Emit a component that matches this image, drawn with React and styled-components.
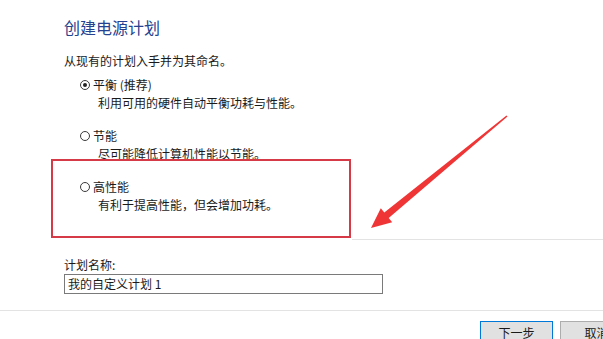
import React from "react";
import styled, { createGlobalStyle } from "styled-components";

const Global = createGlobalStyle`
  html, body { margin: 0; padding: 0; background: #fff; overflow: hidden; }
  body { font-family: "Noto Sans CJK SC", "Noto Sans", sans-serif; color: #1a1a1a; }
`;

const Page = styled.div`
  position: relative;
  width: 603px;
  height: 339px;
  overflow: hidden;
  background: #fff;
`;

const Content = styled.div`
  padding: 17px 0 0 64px;
  display: flex;
  flex-direction: column;
`;

const Title = styled.h1`
  margin: 0;
  font-size: 16px;
  line-height: 20px;
  font-weight: 400;
  color: #24428f;
`;

const Subtitle = styled.p`
  margin: 16px 0 0;
  font-size: 12px;
  line-height: 16px;
`;

const Options = styled.div`
  display: flex;
  flex-direction: column;
  gap: 17px;
  margin-top: 8px;
  padding-left: 16px;
`;

const Option = styled.div`
  display: flex;
  flex-direction: column;
`;

const RadioRow = styled.label`
  display: flex;
  align-items: center;
  gap: 3px;
  font-size: 12px;
  line-height: 16px;
`;

const Radio = styled.span`
  box-sizing: border-box;
  width: 10px;
  height: 10px;
  border-radius: 50%;
  border: 1px solid #3a3a3a;
  display: flex;
  align-items: center;
  justify-content: center;
  &::after {
    content: "";
    width: 4px;
    height: 4px;
    border-radius: 50%;
    background: #222;
    display: ${(p) => (p.$checked ? "block" : "none")};
  }
`;

const Desc = styled.div`
  margin: 2px 0 0 18px;
  font-size: 12px;
  line-height: 16px;
`;

const Divider = styled.div`
  height: 1px;
  background: #e3e3e3;
  margin-top: ${(p) => p.$top || 0}px;
  margin-left: ${(p) => p.$indent || 0}px;
`;

const NameSection = styled.div`
  padding: 17px 0 0 64px;
  display: flex;
  flex-direction: column;
  gap: 1px;
`;

const NameLabel = styled.div`
  font-size: 12px;
  line-height: 16px;
`;

const NameInput = styled.div`
  box-sizing: border-box;
  width: 319px;
  height: 20px;
  border: 1px solid #7a7a7a;
  padding-left: 3px;
  font-size: 12px;
  line-height: 18px;
`;

const Footer = styled.div`
  margin-top: 16px;
  border-top: 1px solid #e3e3e3;
  padding: 10px 0 0 480px;
  display: flex;
  gap: 7px;
`;

const Button = styled.div`
  box-sizing: border-box;
  flex: 0 0 auto;
  width: 73px;
  height: 23px;
  background: #e1e1e1;
  border: 1px solid ${(p) => (p.$primary ? "#0078d7" : "#adadad")};
  font-size: 12px;
  line-height: 21px;
  text-align: center;
  color: #1a1a1a;
`;

const Highlight = styled.div`
  position: absolute;
  left: 51px;
  top: 159px;
  width: 300px;
  height: 79px;
  box-sizing: border-box;
  border: 2px solid #d63a46;
  pointer-events: none;
`;

const ArrowLayer = styled.svg`
  position: absolute;
  left: 0;
  top: 0;
  pointer-events: none;
`;

const plans = [
  { name: "平衡 (推荐)", desc: "利用可用的硬件自动平衡功耗与性能。", checked: true },
  { name: "节能", desc: "尽可能降低计算机性能以节能。" },
  { name: "高性能", desc: "有利于提高性能，但会增加功耗。" },
];

export default function App() {
  return (
    <Page>
      <Global />
      <Content>
        <Title>创建电源计划</Title>
        <Subtitle>从现有的计划入手并为其命名。</Subtitle>
        <Options>
          {plans.map((p) => (
            <Option key={p.name}>
              <RadioRow>
                <Radio $checked={p.checked} />
                {p.name}
              </RadioRow>
              <Desc>{p.desc}</Desc>
            </Option>
          ))}
        </Options>
      </Content>
      <Divider $top={26} $indent={352} />
      <NameSection>
        <NameLabel>计划名称:</NameLabel>
        <NameInput>我的自定义计划 1</NameInput>
      </NameSection>
      <Footer>
        <Button $primary>下一步</Button>
        <Button>取消</Button>
      </Footer>
      <Highlight />
      <ArrowLayer width="603" height="339" viewBox="0 0 603 339">
        <polygon
          points="507.5,116.6 388.7,218 392.2,222.3 371,228 380.8,208.3 384.3,212.6 506.5,115.4"
          fill="#ef3535"
        />
      </ArrowLayer>
    </Page>
  );
}
